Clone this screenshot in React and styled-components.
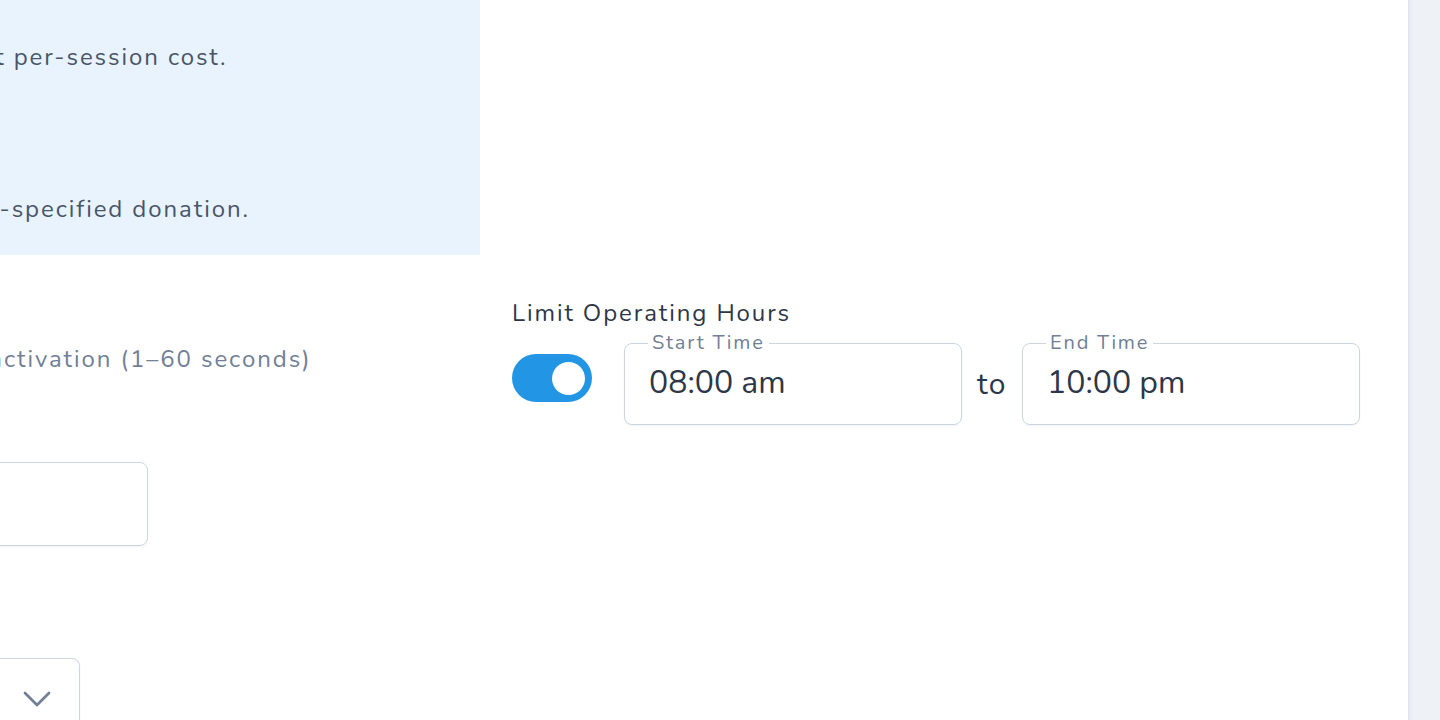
import React from 'react'
import styled, { createGlobalStyle } from 'styled-components'

const GlobalStyle = createGlobalStyle`
  html, body {
    margin: 0;
    padding: 0;
    background: #fff;
    overflow: hidden;
  }
  body {
    font-family: "Nunito", "Lato", "Noto Sans", sans-serif;
    color: #2d3748;
  }
`

const Page = styled.div`
  display: flex;
  width: 1440px;
  height: 720px;
  overflow: hidden;
`

const Main = styled.main`
  flex: 1;
  background: #fff;
  padding-right: 48px;
  overflow: hidden;
`

const SideStrip = styled.aside`
  width: 31px;
  background: #eef2f7;
  border-left: 1px solid #dfe5ec;
  box-shadow: inset 4px 0 4px -3px rgba(30, 50, 80, 0.06);
`

const Content = styled.div`
  display: grid;
  grid-template-columns: 848px 848px;
  column-gap: 32px;
  margin-left: -368px;
  margin-top: -24px;
`

const Column = styled.div`
  display: flex;
  flex-direction: column;
`

const InfoBox = styled.div`
  background: #e8f3fd;
  padding: 24px 24px 27px 38px;
  font-size: 24px;
  line-height: 38px;
  letter-spacing: 0.08em;
  color: #4a5568;
`

const InfoLine = styled.div`
  white-space: nowrap;
  font-weight: ${(p) => (p.term ? 700 : 400)};
`

const Label = styled.div`
  font-size: 24px;
  line-height: 36px;
  letter-spacing: 0.08em;
  color: #2d3748;
  margin-top: ${(p) => p.top || 0}px;
`

const Helper = styled.div`
  font-size: 24px;
  line-height: 36px;
  letter-spacing: 0.08em;
  color: #718096;
  margin-top: 10px;
  white-space: nowrap;
`

const Field = styled.fieldset`
  margin: ${(p) => p.top || 0}px 0 0;
  width: ${(p) => p.width || 'auto'};
  flex: ${(p) => (p.grow ? 1 : 'none')};
  min-width: 0;
  box-sizing: border-box;
  border: 1px solid #cbd5e0;
  border-radius: 8px;
  padding: 10px 24px ${(p) => (p.tall ? 23 : 21)}px;
  box-shadow: 0 1px 2px rgba(30, 50, 80, 0.06);
`

const Legend = styled.legend`
  font-size: 20px;
  line-height: 20px;
  letter-spacing: 0.09em;
  color: #718096;
  padding: 0 4px;
  margin-left: -1px;
`

const Value = styled.div`
  font-size: 32px;
  line-height: 40px;
  color: #2d3748;
  min-height: 40px;
`

const SelectBox = styled.div`
  margin-top: ${(p) => p.top || 0}px;
  width: ${(p) => p.width};
  height: 82px;
  box-sizing: border-box;
  border: 1px solid #cbd5e0;
  border-radius: 8px;
  display: flex;
  align-items: center;
  justify-content: space-between;
  padding: 0 28px 0 24px;
  font-size: 28px;
  color: #2d3748;
  box-shadow: 0 1px 2px rgba(30, 50, 80, 0.06);
`

const HoursRow = styled.div`
  display: flex;
  align-items: center;
  margin-top: 2px;
`

const Toggle = styled.button`
  width: 80px;
  height: 48px;
  border: none;
  border-radius: 24px;
  background: ${(p) => (p.on ? '#2395e5' : '#cbd5e0')};
  padding: 0 7px;
  display: flex;
  align-items: center;
  justify-content: ${(p) => (p.on ? 'flex-end' : 'flex-start')};
  margin: -2px 32px 0 0;
  flex: none;
  cursor: pointer;
`

const Knob = styled.span`
  width: 33px;
  height: 33px;
  border-radius: 50%;
  background: #fff;
`

const To = styled.span`
  font-size: 30px;
  letter-spacing: 1.5px;
  color: #2d3748;
  margin: 10px 15px 0 15px;
`

const Chevron = () => (
  <svg width="28" height="16" viewBox="0 0 28 16" fill="none">
    <path d="M2 2l12 12L26 2" stroke="#718096" strokeWidth="2.8" strokeLinecap="round" strokeLinejoin="round" />
  </svg>
)

export default function App() {
  return (
    <>
      <GlobalStyle />
      <Page>
        <Main>
          <Content>
            <Column>
              <InfoBox>
                <InfoLine term>Flat Rate</InfoLine>
                <InfoLine>Customers are billed a flat per-session cost.</InfoLine>
                <InfoLine term>Free</InfoLine>
                <InfoLine>No payment.</InfoLine>
                <InfoLine term>Donation</InfoLine>
                <InfoLine>Customers may pay a user-specified donation.</InfoLine>
              </InfoBox>
              <Label top={40}>Auto Shut-Off</Label>
              <Helper>Idle time after use before deactivation (1–60 seconds)</Helper>
              <Field top={75} width="516px" tall>
                <Legend>Seconds</Legend>
                <Value>30</Value>
              </Field>
              <Label top={58}>Pricing Mode</Label>
              <SelectBox top={18} width="448px">
                <span>Flat</span>
                <Chevron />
              </SelectBox>
            </Column>
            <Column>
              <Label top={319}>Limit Operating Hours</Label>
              <HoursRow>
                <Toggle on aria-label="Limit operating hours">
                  <Knob />
                </Toggle>
                <Field grow>
                  <Legend>Start Time</Legend>
                  <Value>08:00 am</Value>
                </Field>
                <To>to</To>
                <Field grow>
                  <Legend>End Time</Legend>
                  <Value>10:00 pm</Value>
                </Field>
              </HoursRow>
            </Column>
          </Content>
        </Main>
        <SideStrip />
      </Page>
    </>
  )
}
